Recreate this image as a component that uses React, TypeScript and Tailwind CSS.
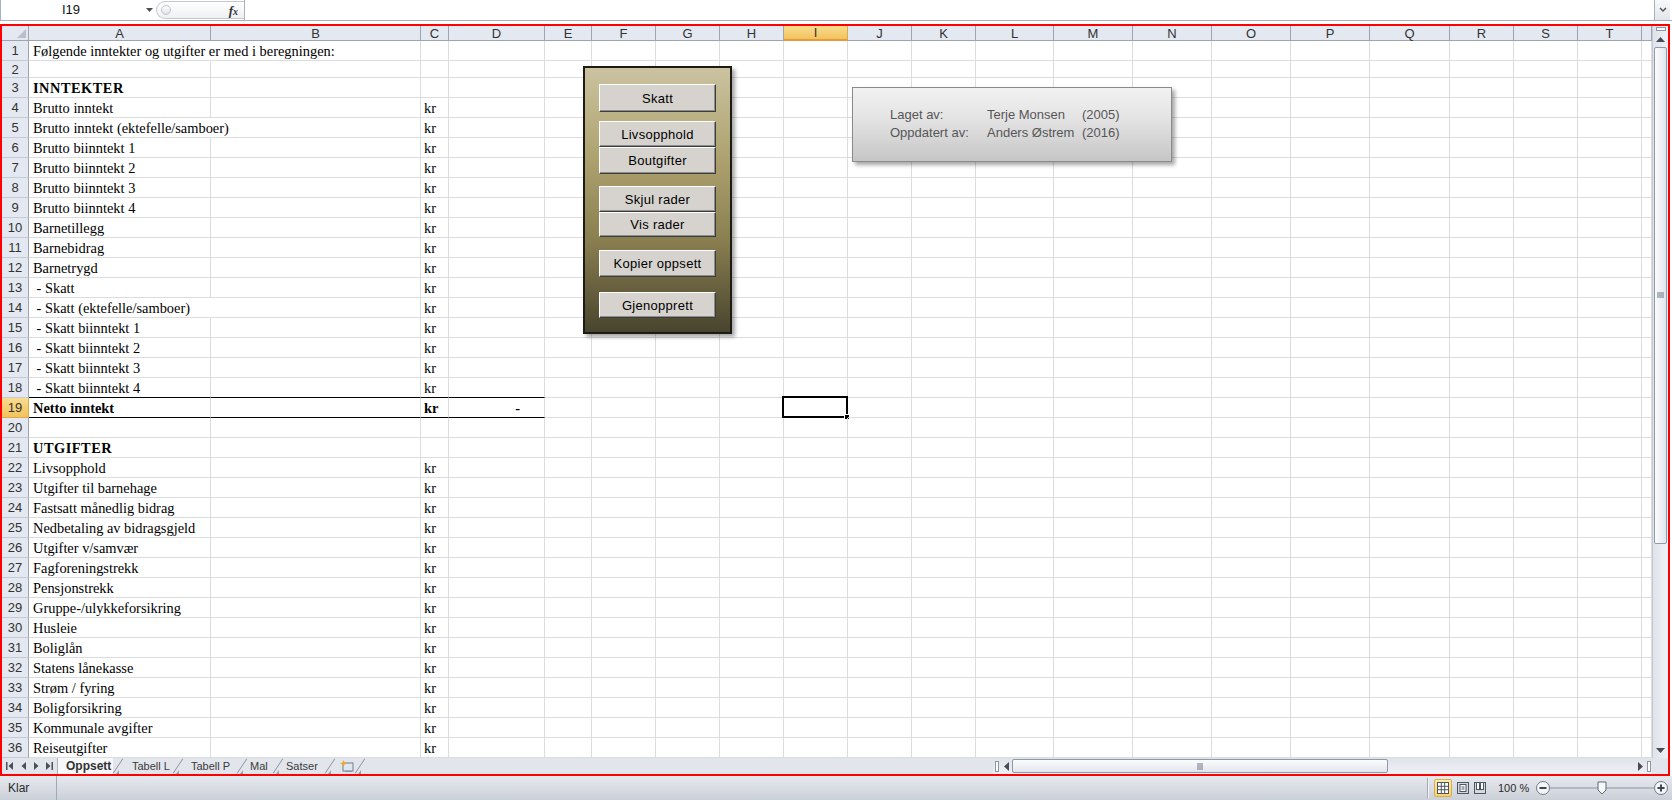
import React from "react";

const letters = ["A", "B", "C", "D", "E", "F", "G", "H", "I", "J", "K", "L", "M", "N", "O", "P", "Q", "R", "S", "T", ""];

type Row = { a?: string; b?: boolean; kr?: boolean; over?: boolean; d?: string };

const rows: Row[] = [
  { a: "Følgende inntekter og utgifter er med i beregningen:", over: true },
  {},
  { a: "INNTEKTER", b: true },
  { a: "Brutto inntekt", kr: true },
  { a: "Brutto inntekt (ektefelle/samboer)", kr: true, over: true },
  { a: "Brutto biinntekt 1", kr: true },
  { a: "Brutto biinntekt 2", kr: true },
  { a: "Brutto biinntekt 3", kr: true },
  { a: "Brutto biinntekt 4", kr: true },
  { a: "Barnetillegg", kr: true },
  { a: "Barnebidrag", kr: true },
  { a: "Barnetrygd", kr: true },
  { a: " - Skatt", kr: true },
  { a: " - Skatt (ektefelle/samboer)", kr: true, over: true },
  { a: " - Skatt biinntekt 1", kr: true },
  { a: " - Skatt biinntekt 2", kr: true },
  { a: " - Skatt biinntekt 3", kr: true },
  { a: " - Skatt biinntekt 4", kr: true },
  { a: "Netto inntekt", b: true, kr: true, d: "-" },
  {},
  { a: "UTGIFTER", b: true },
  { a: "Livsopphold", kr: true },
  { a: "Utgifter til barnehage", kr: true },
  { a: "Fastsatt månedlig bidrag", kr: true },
  { a: "Nedbetaling av bidragsgjeld", kr: true },
  { a: "Utgifter v/samvær", kr: true },
  { a: "Fagforeningstrekk", kr: true },
  { a: "Pensjonstrekk", kr: true },
  { a: "Gruppe-/ulykkeforsikring", kr: true },
  { a: "Husleie", kr: true },
  { a: "Boliglån", kr: true },
  { a: "Statens lånekasse", kr: true },
  { a: "Strøm / fyring", kr: true },
  { a: "Boligforsikring", kr: true },
  { a: "Kommunale avgifter", kr: true },
  { a: "Reiseutgifter", kr: true },
];

function FormulaBar() {
  return (
    <div className="h-[24px]">
      <div className="h-[21px] flex border-b border-l border-[#a9b1bd] bg-white">
        <div className="w-[141px] flex items-center pl-[61px] text-[13px] text-[#111]">I19</div>
        <div className="w-[14px] flex items-center justify-center">
          <svg width="7" height="4"><polygon points="0,0 7,0 3.5,4" fill="#4b4f56" /></svg>
        </div>
        <div className="w-[88px] mt-[1px] h-[18px] flex items-center rounded-l-[10px] border border-r-0 border-[#c3c8d1] bg-[linear-gradient(to_bottom,#ffffff,#eef0f3)]">
          <div className="ml-[4px] w-[10px] h-[10px] rounded-full border border-[#c0c5cd] bg-[linear-gradient(to_bottom,#ffffff,#dfe2e7)]" />
          <span className="ml-auto mr-[6px] font-['Liberation_Serif',serif] italic font-bold text-[13px] text-[#333] leading-none">
            f<span className="text-[10px]">x</span>
          </span>
        </div>
        <div className="flex-1 border-l border-[#a9b1bd]" />
        <div className="w-[16px] border-l border-[#a9b1bd] bg-[linear-gradient(to_bottom,#f8f9fb,#e2e5ea)] flex items-center justify-center">
          <svg width="8" height="6"><polyline points="1,1 4,4 7,1" fill="none" stroke="#555" strokeWidth="1.5" /></svg>
        </div>
        <div className="w-[2px]" />
      </div>
    </div>
  );
}

function Sheet() {
  return (
    <div className="w-[1650px] grid grid-cols-[27px_182px_210px_28px_96px_47px_64px_64px_64px_64px_64px_64px_78px_79px_79px_79px_79px_80px_64px_64px_64px_10px] grid-rows-[15px_20px_17px_repeat(34,20px)] bg-white">
      <div className="relative bg-[#e4e8f0] border-r border-b border-[#9ea5b1]">
        <svg className="absolute right-[2px] bottom-[2px]" width="9" height="9"><polygon points="9,0 9,9 0,9" fill="#b9bfca" /></svg>
      </div>
      {letters.map((l, i) =>
        l === "I" ? (
          <div key={i} className="flex items-center justify-center bg-[linear-gradient(to_bottom,#f9dc8f,#f2c25d)] border-r border-b-2 border-r-[#e0a849] border-b-[#e79a3c] text-[13px] leading-none text-[#333]">
            {l}
          </div>
        ) : (
          <div key={i} className="flex items-center justify-center bg-[#e4e8f0] border-r border-b border-[#9ea5b1] text-[13px] leading-none text-[#333]">
            {l}
          </div>
        )
      )}
      {rows.map((r, i) => {
        const n = i + 1;
        const cells = [];
        cells.push(
          n === 19 ? (
            <div key="h" className="flex items-center justify-center bg-[linear-gradient(to_bottom,#f9dc8f,#f2c25d)] border-r border-b border-r-[#e0a849] border-b-[#e0a849] text-[13px] leading-none text-[#333]">
              {n}
            </div>
          ) : (
            <div key="h" className="flex items-center justify-center bg-[#e4e8f0] border-r border-b border-r-[#9ea5b1] border-b-[#c6cad3] text-[13px] leading-none text-[#333]">
              {n}
            </div>
          )
        );
        letters.forEach((_, c) => {
          const dark = (n === 18 || n === 19) && c <= 3;
          const bCls = dark ? "border-b-black" : "border-b-[#dadcdd]";
          const rCls = c === 0 && r.over ? "border-r-transparent" : "border-r-[#dadcdd]";
          const weight = r.b ? "font-bold" : "font-normal";
          let content: React.ReactNode = null;
          let extra = "pl-[3px]";
          if (c === 0 && r.a) {
            content = r.a;
            extra = r.b && !r.kr ? "pl-[4px] tracking-[0.5px]" : "pl-[4px]";
          }
          if (c === 2 && r.kr) content = "kr";
          if (c === 3 && r.d) {
            content = r.d;
            extra = "justify-end pr-[24px]";
          }
          cells.push(
            <div
              key={c}
              className={`relative flex items-center pt-[1px] whitespace-pre border-r border-b ${rCls} ${bCls} ${weight} ${extra} font-['Liberation_Serif',serif] text-[14.4px] leading-none text-black`}
            >
              {content}
              {n === 19 && c === 8 && (
                <div className="absolute left-[-2px] top-[-2px] w-[66px] h-[22px] border-2 border-black">
                  <div className="absolute right-[-4px] bottom-[-4px] w-[6px] h-[6px] bg-black border border-white" />
                </div>
              )}
            </div>
          );
        });
        return <React.Fragment key={n}>{cells}</React.Fragment>;
      })}
    </div>
  );
}

function VScroll() {
  return (
    <div className="w-[16px] flex flex-col border-l border-[#c4c9d2] bg-[linear-gradient(to_right,#dfe3ea,#eff1f5)]">
      <div className="h-[6px] flex items-center justify-center">
        <div className="w-[10px] h-[4px] border border-[#8d96a4] bg-white" />
      </div>
      <div className="h-[15px] flex items-center justify-center">
        <svg width="9" height="5"><polygon points="0,5 4.5,0 9,5" fill="#464b54" /></svg>
      </div>
      <div className="h-[497px] mx-[1px] rounded-[2px] border border-[#8e99aa] bg-[linear-gradient(to_right,#fbfcfd,#e2e6ed)] flex items-center justify-center">
        <svg width="7" height="7">
          <line x1="0" y1="1" x2="7" y2="1" stroke="#6d7686" />
          <line x1="0" y1="3" x2="7" y2="3" stroke="#6d7686" />
          <line x1="0" y1="5" x2="7" y2="5" stroke="#6d7686" />
        </svg>
      </div>
      <div className="flex-1" />
      <div className="h-[16px] flex items-center justify-center">
        <svg width="9" height="5"><polygon points="0,0 9,0 4.5,5" fill="#464b54" /></svg>
      </div>
    </div>
  );
}

function Slant() {
  return (
    <svg width="10" height="16" className="shrink-0">
      <line x1="0" y1="15.5" x2="10" y2="0.5" stroke="#8b929d" />
      <polygon points="3,16 6,16 6,12" fill="#9aa1ab" />
    </svg>
  );
}

function Tabs() {
  return (
    <div className="w-[991px] flex bg-[#e2e6ec] text-[11px] leading-none text-[#3a3a3a]">
      <div className="w-[56px] flex items-center border-r border-[#aeb4be]">
        <svg width="55" height="16">
          <rect x="4" y="4" width="1.5" height="8" fill="#4a4f58" />
          <polygon points="11,4 6.5,8 11,12" fill="#4a4f58" />
          <polygon points="24,4 19.5,8 24,12" fill="#4a4f58" />
          <polygon points="32,4 36.5,8 32,12" fill="#4a4f58" />
          <polygon points="44,4 48.5,8 44,12" fill="#4a4f58" />
          <rect x="49.5" y="4" width="1.5" height="8" fill="#4a4f58" />
        </svg>
      </div>
      <div className="w-[55px] flex items-center pl-[8px] bg-[#f7f8fa] font-bold text-[12px] text-[#333]">Oppsett</div>
      <Slant />
      <div className="w-[50px] flex items-center pl-[9px]">Tabell L</div>
      <Slant />
      <div className="w-[54px] flex items-center pl-[8px]">Tabell P</div>
      <Slant />
      <div className="w-[26px] flex items-center pl-[3px]">Mal</div>
      <Slant />
      <div className="w-[42px] flex items-center pl-[3px]">Satser</div>
      <Slant />
      <div className="w-[20px] flex items-center pl-[5px]">
        <svg width="14" height="13">
          <rect x="3" y="3" width="10" height="8" fill="#dfe6f0" stroke="#6f7f96" />
          <line x1="5" y1="11.5" x2="12" y2="11.5" stroke="#8796ab" />
          <polygon points="3.5,0 4.5,2.5 7,3.5 4.5,4.5 3.5,7 2.5,4.5 0,3.5 2.5,2.5" fill="#f2a81d" />
        </svg>
      </div>
      <Slant />
      <div className="flex-1" />
    </div>
  );
}

function HScroll() {
  return (
    <div className="w-[659px] flex bg-[linear-gradient(to_bottom,#dfe3ea,#eff1f5)]">
      <div className="w-[7px] flex items-center justify-center">
        <div className="w-[4px] h-[11px] border border-[#8d96a4] bg-white" />
      </div>
      <div className="w-[12px] flex items-center justify-center">
        <svg width="5" height="9"><polygon points="5,0 0,4.5 5,9" fill="#464b54" /></svg>
      </div>
      <div className="w-[376px] my-[1px] rounded-[2px] border border-[#8e99aa] bg-[linear-gradient(to_bottom,#fbfcfd,#e2e6ed)] flex items-center justify-center">
        <svg width="7" height="7">
          <line x1="1" y1="0" x2="1" y2="7" stroke="#6d7686" />
          <line x1="3" y1="0" x2="3" y2="7" stroke="#6d7686" />
          <line x1="5" y1="0" x2="5" y2="7" stroke="#6d7686" />
        </svg>
      </div>
      <div className="flex-1" />
      <div className="w-[12px] flex items-center justify-center">
        <svg width="5" height="9"><polygon points="0,0 5,4.5 0,9" fill="#464b54" /></svg>
      </div>
      <div className="w-[6px] flex items-center justify-center">
        <div className="w-[4px] h-[11px] border border-[#8d96a4] bg-white" />
      </div>
    </div>
  );
}

function StatusBar() {
  return (
    <div className="h-[24px] flex items-center bg-[linear-gradient(to_bottom,#e6e9ee,#cbd0d8)] text-[12px] text-[#2b2b2b]">
      <div className="w-[57px] h-full flex items-center pl-[8px] border-r border-[#a3a9b3]">Klar</div>
      <div className="flex-1" />
      <div className="w-[2px] h-[20px] border-l border-r border-l-[#a3a9b3] border-r-[#f4f5f7]" />
      <div className="ml-[5px] w-[18px] h-[18px] flex items-center justify-center rounded-[2px] border border-[#d9ad4f] bg-[linear-gradient(to_bottom,#fdeba8,#f9d26a)]">
        <svg width="12" height="12">
          <rect x="0.5" y="0.5" width="11" height="11" fill="#fff" stroke="#4d5561" />
          <line x1="4.3" y1="0" x2="4.3" y2="12" stroke="#4d5561" />
          <line x1="7.7" y1="0" x2="7.7" y2="12" stroke="#4d5561" />
          <line x1="0" y1="4.3" x2="12" y2="4.3" stroke="#4d5561" />
          <line x1="0" y1="7.7" x2="12" y2="7.7" stroke="#4d5561" />
        </svg>
      </div>
      <div className="ml-[3px] w-[15px] flex items-center justify-center">
        <svg width="12" height="12">
          <rect x="0.5" y="0.5" width="11" height="11" fill="#d5d9df" stroke="#4d5561" />
          <rect x="3" y="2.5" width="6" height="7" fill="#fff" stroke="#4d5561" />
          <line x1="4.5" y1="5" x2="7.5" y2="5" stroke="#4d5561" />
          <line x1="4.5" y1="7" x2="7.5" y2="7" stroke="#4d5561" />
        </svg>
      </div>
      <div className="ml-[2px] w-[15px] flex items-center justify-center">
        <svg width="12" height="12">
          <rect x="0.5" y="0.5" width="11" height="11" fill="#d5d9df" stroke="#4d5561" />
          <rect x="2.5" y="0.5" width="3" height="7" fill="#fff" stroke="#4d5561" />
          <rect x="6.5" y="0.5" width="3" height="7" fill="#fff" stroke="#4d5561" />
        </svg>
      </div>
      <div className="ml-[11px] w-[30px] whitespace-nowrap text-[11px]">100 %</div>
      <div className="ml-[8px] w-[132px] flex items-center">
        <svg width="132" height="18">
          <line x1="14" y1="9" x2="118" y2="9" stroke="#8a94a2" />
          <line x1="66" y1="6" x2="66" y2="12" stroke="#8a94a2" />
          <circle cx="7" cy="9" r="6.5" fill="#f4f5f7" stroke="#6f7a89" />
          <rect x="3.5" y="8" width="7" height="2" fill="#3f4651" />
          <circle cx="125" cy="9" r="6.5" fill="#f4f5f7" stroke="#6f7a89" />
          <rect x="121.5" y="8" width="7" height="2" fill="#3f4651" />
          <rect x="124" y="5.5" width="2" height="7" fill="#3f4651" />
          <polygon points="62,3 70,3 70,11 66,15 62,11" fill="#f7f8fa" stroke="#5d6877" />
        </svg>
      </div>
      <div className="w-[4px]" />
    </div>
  );
}

function PanelButton({ label, h, mt }: { label: string; h: string; mt: string }) {
  return (
    <div
      className={`${h} ${mt} w-[117px] shrink-0 flex items-center justify-center bg-[#d6d3ce] border border-t-white border-l-white border-r-[#3c3c3c] border-b-[#3c3c3c] shadow-[inset_-1px_-1px_0_#8e8e8e] text-[13px] tracking-[0.3px] text-black leading-none`}
    >
      {label}
    </div>
  );
}

function ButtonPanel() {
  return (
    <div className="absolute left-[583px] top-[66px] w-[149px] h-[268px] border-2 border-[#1d1c14] bg-[linear-gradient(to_bottom,#cbc3a0_0%,#aca16e_35%,#8a7f50_65%,#49442e_100%)] shadow-[3px_3px_4px_rgba(0,0,0,0.35)] flex flex-col items-center">
      <PanelButton label="Skatt" h="h-[28px]" mt="mt-[16px]" />
      <PanelButton label="Livsopphold" h="h-[26px]" mt="mt-[9px]" />
      <PanelButton label="Boutgifter" h="h-[27px]" mt="mt-0" />
      <PanelButton label="Skjul rader" h="h-[26px]" mt="mt-[12px]" />
      <PanelButton label="Vis rader" h="h-[25px]" mt="mt-0" />
      <PanelButton label="Kopier oppsett" h="h-[27px]" mt="mt-[13px]" />
      <PanelButton label="Gjenopprett" h="h-[26px]" mt="mt-[15px]" />
    </div>
  );
}

function InfoBox() {
  return (
    <div className="absolute left-[852px] top-[87px] w-[320px] h-[75px] border border-[#8a8a8a] bg-[linear-gradient(to_bottom,#f3f2f3,#e5e4e5_40%,#c6c6c6)] shadow-[3px_3px_4px_rgba(0,0,0,0.35)] pl-[37px] pt-[18px] text-[13px] leading-[18px] text-[#565656]">
      <div className="grid grid-cols-[97px_95px_auto] whitespace-nowrap">
        <span>Laget av:</span>
        <span>Terje Monsen</span>
        <span>(2005)</span>
        <span>Oppdatert av:</span>
        <span>Anders Østrem</span>
        <span>(2016)</span>
      </div>
    </div>
  );
}

export default function App() {
  return (
    <div className="relative w-[1672px] h-[800px] overflow-hidden bg-white font-['Liberation_Sans',Arial,sans-serif] text-black">
      <FormulaBar />
      <div className="w-[1670px] h-[752px] border-2 border-[#ff0000] flex flex-col">
        <div className="flex h-[732px]">
          <Sheet />
          <VScroll />
        </div>
        <div className="flex h-[16px]">
          <Tabs />
          <HScroll />
          <div className="w-[16px] bg-[#e2e6ec]" />
        </div>
      </div>
      <StatusBar />
      <ButtonPanel />
      <InfoBox />
    </div>
  );
}
